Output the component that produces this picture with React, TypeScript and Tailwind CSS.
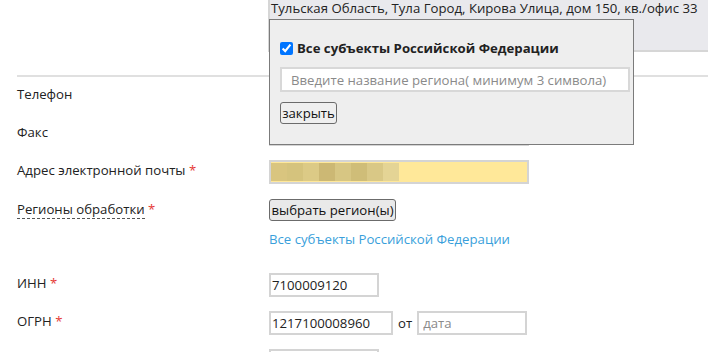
import React from 'react';

const inputCls =
  'h-[24px] border-2 border-[#d4d4d4] bg-white px-[1px] text-[13.2px] leading-[18px] text-[#222] outline-none placeholder:text-[#8a8a8a]';

const Req = () => <span className="text-[#e53935]"> *</span>;

interface RowProps {
  label: React.ReactNode;
  className?: string;
  children?: React.ReactNode;
}

const Row: React.FC<RowProps> = ({ label, className = 'h-[38px]', children }) => (
  <div className={`flex items-start ${className}`}>
    <div className="w-[252px] shrink-0 pt-[1px]">{label}</div>
    <div className="flex items-center gap-[5px]">{children}</div>
  </div>
);

const blur = ['#d9c57f', '#d5c37d', '#dcca86', '#ccb874', '#d7c683', '#cfbd78', '#d9c886', '#e4d495'];

export default function App() {
  return (
    <div className="relative h-[352px] w-[708px] overflow-hidden bg-white font-['Open_Sans',sans-serif] text-[13.2px] leading-[18px] text-[#222]">
      <div className="pl-[17px]">
        <div className="flex">
          <div className="w-[251px] shrink-0" />
          <div className="h-[52px] flex-1 whitespace-nowrap border-b-2 border-l-2 border-[#d6d6d6] bg-[#e9e9ed] pl-[1px] leading-[16px]">
            Тульская Область, Тула Город, Кирова Улица, дом 150, кв./офис 33
          </div>
        </div>

        <div className="mt-[23px] h-[2px] bg-[#e0e0e0]" />

        <div className="mt-[7px]">
          <Row label="Телефон">
            <input className={`${inputCls} w-[260px]`} readOnly />
          </Row>
          <Row label="Факс">
            <input className={`${inputCls} w-[260px]`} readOnly />
          </Row>
          <Row
            className="h-[39px]"
            label={
              <>
                Адрес электронной почты
                <Req />
              </>
            }
          >
            <div className="flex h-[24px] w-[260px] items-stretch border-2 border-[#d4d4d4] bg-[#ffe899] py-px">
              {blur.map((c, i) => (
                <div key={i} className="w-[16px]" style={{ backgroundColor: c }} />
              ))}
            </div>
          </Row>
          <Row
            className="h-[22px]"
            label={
              <>
                <span className="border-b border-dashed border-[#555]">Регионы обработки</span>
                <Req />
              </>
            }
          >
            <button className="h-[22px] w-[127px] rounded-[3px] border border-[#6b6b6b] bg-[#e9e9e9] px-0 text-[13.2px] leading-[18px] text-[#111]">
              выбрать регион(ы)
            </button>
          </Row>
          <div className="mt-[9px] pl-[252px] text-[#3a9fdb]">Все субъекты Российской Федерации</div>

          <div className="mt-[25px]">
            <Row
              label={
                <>
                  ИНН
                  <Req />
                </>
              }
            >
              <input className={`${inputCls} w-[110px]`} defaultValue="7100009120" readOnly />
            </Row>
            <Row
              label={
                <>
                  ОГРН
                  <Req />
                </>
              }
            >
              <input className={`${inputCls} w-[124px]`} defaultValue="1217100008960" readOnly />
              <span>от</span>
              <input className={`${inputCls} w-[110px] pl-[4px]`} placeholder="дата" readOnly />
            </Row>
            <Row label="">
              <input className={`${inputCls} w-[110px]`} readOnly />
            </Row>
          </div>
        </div>
      </div>

      {/* region picker popup */}
      <div className="absolute left-[269px] top-[19px] h-[126px] w-[365px] border border-[#7b7b7b] bg-[#eeeeee] px-[10px] pt-[19px]">
        <label className="flex h-[18px] items-center gap-[4px] font-bold">
          <input type="checkbox" defaultChecked className="m-0 h-[13px] w-[13px] accent-[#0075ff]" />
          Все субъекты Российской Федерации
        </label>
        <input
          className="mt-[10px] h-[25px] w-[350px] border-2 border-[#d8d8d8] bg-white px-[9px] text-[13.2px] outline-none placeholder:text-[#8a8a8a]"
          placeholder="Введите название региона( минимум 3 символа)"
          readOnly
        />
        <button className="mt-[10px] block h-[22px] w-[57px] rounded-[3px] border border-[#6b6b6b] bg-[#efefef] px-0 text-[13.2px] leading-[18px] text-[#111]">
          закрыть
        </button>
      </div>
    </div>
  );
}
